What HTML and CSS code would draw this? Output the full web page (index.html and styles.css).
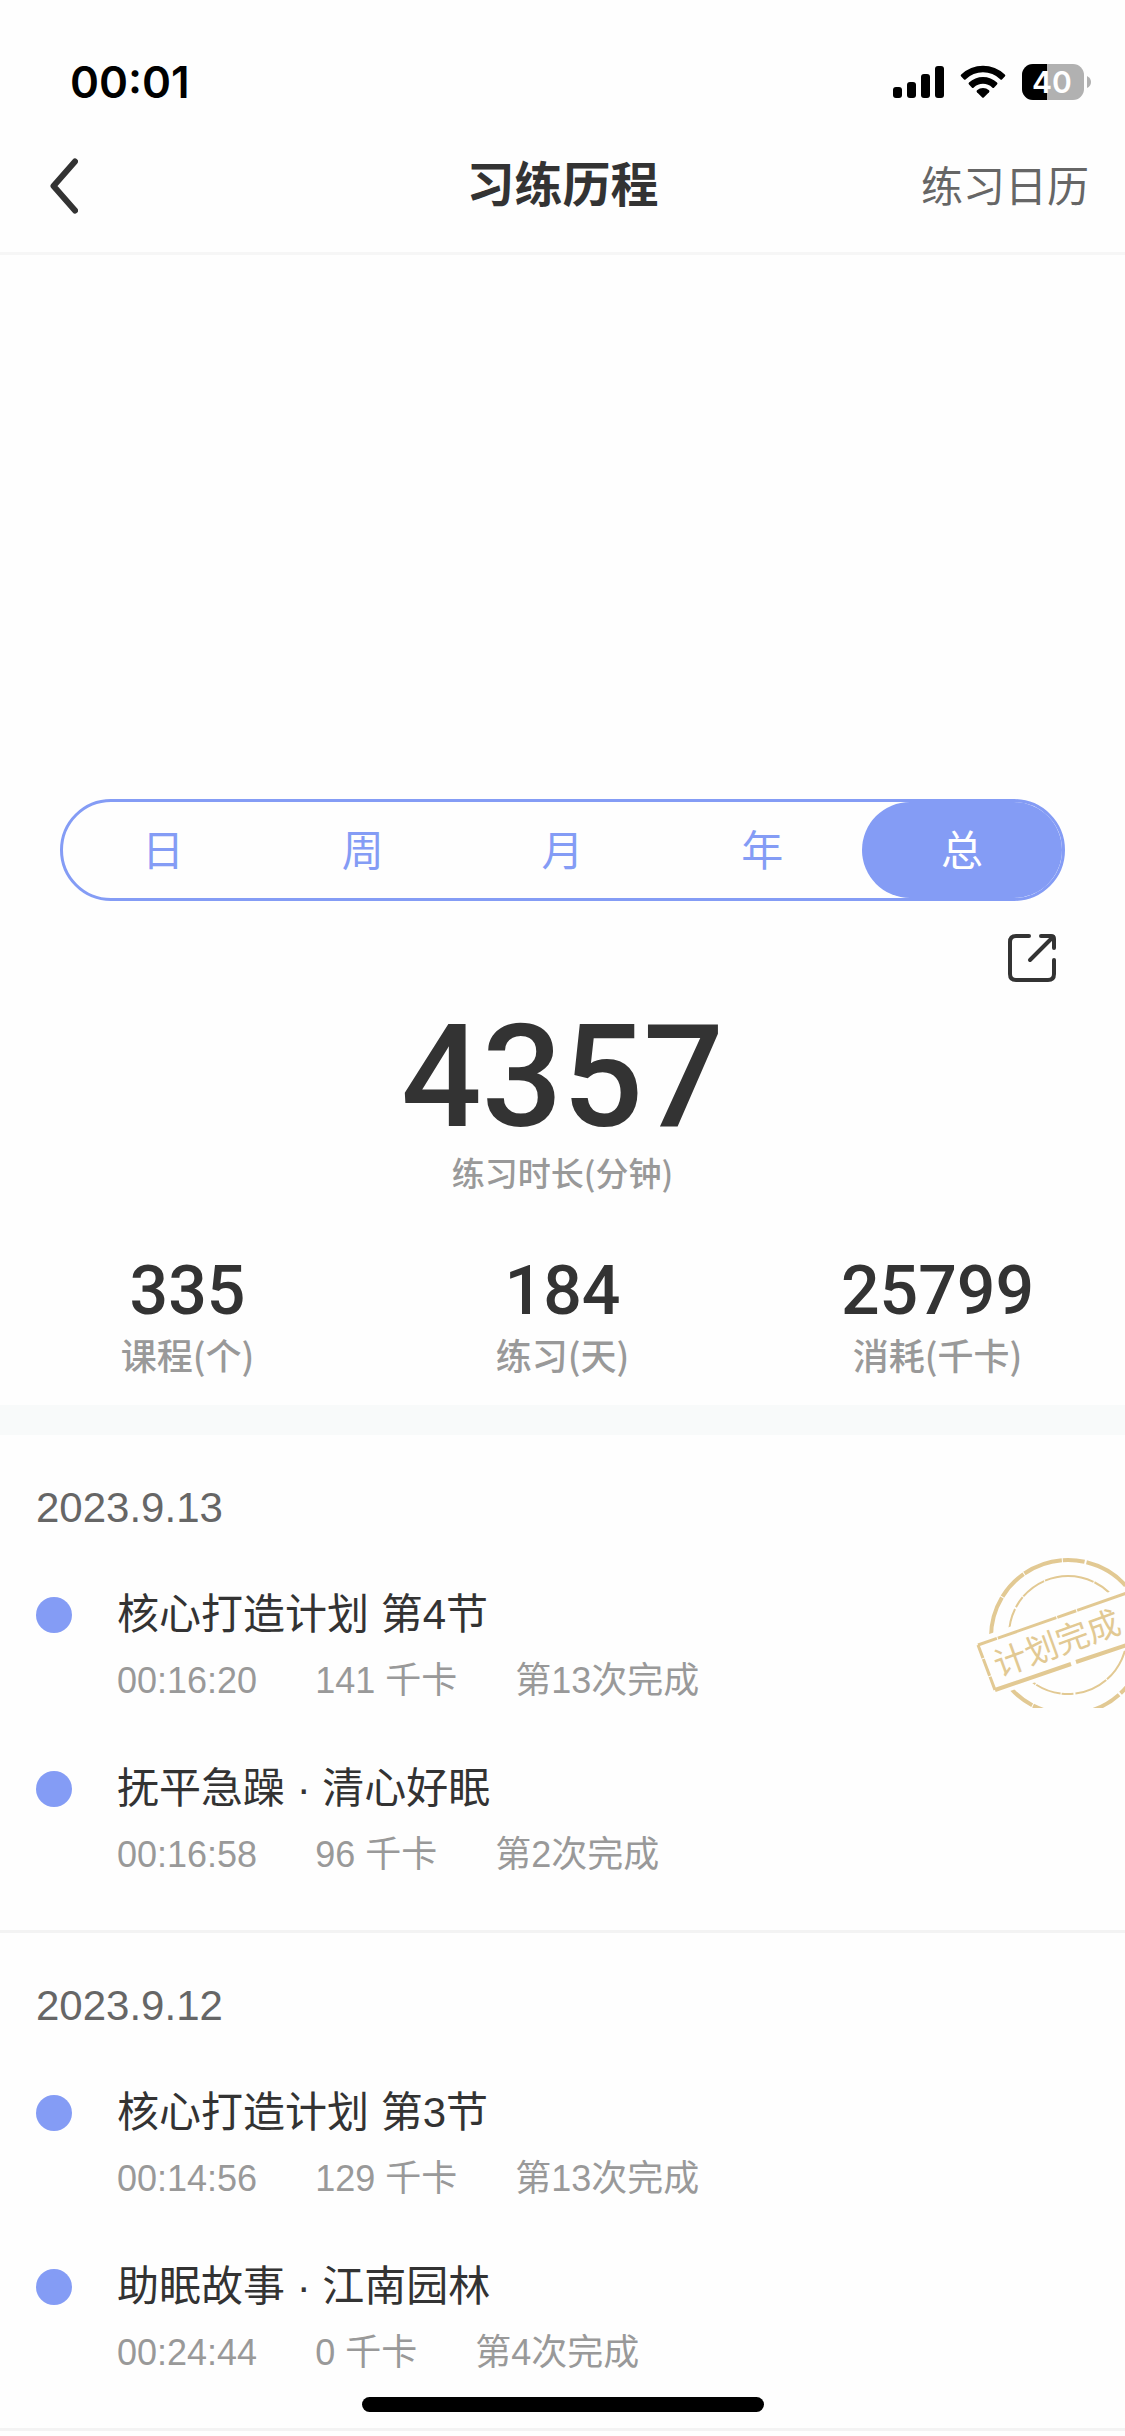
FILE: index.html
```html
<!DOCTYPE html>
<html lang="zh-CN">
  <head>
    <meta charset="utf-8" />
    <meta name="viewport" content="width=device-width, initial-scale=1" />
    <title>习练历程</title>
    <link rel="stylesheet" href="styles.css">
  </head>
  <body>
    <div class="status-bar">
      <span class="time">00:01</span>
      <div class="status-icons">
        <svg width="51" height="36" viewBox="0 0 51 36">
          <rect x="0" y="23" width="9" height="11" rx="3" />
          <rect x="14" y="18" width="9" height="16" rx="3" />
          <rect x="28" y="10" width="9" height="24" rx="3" />
          <rect x="42" y="2" width="9" height="32" rx="3" />
        </svg>
        <svg width="46" height="36" viewBox="0 0 46 36">
          <path d="M1.2 10.6a31.5 31.5 0 0 1 43.6 0q1 1 0 2l-2.6 2.6q-1 1-2 0a24.6 24.6 0 0 0-34.4 0q-1 1-2 0L1.2 12.6q-1-1 0-2z" />
          <path d="M9 18.6a20.4 20.4 0 0 1 28 0q1 1 0 2l-2.8 2.8q-1 1-2 0a13.5 13.5 0 0 0-18.4 0q-1 1-2 0L9 20.6q-1-1 0-2z" />
          <path d="M17 26.3a9.3 9.3 0 0 1 12 0q1 1 0 2L24 33.3q-1 1-2 0L17 28.3q-1-1 0-2z" />
        </svg>
        <svg width="69" height="36" viewBox="0 0 69 36">
          <clipPath id="battery">
            <rect width="62" height="36" rx="11" />
          </clipPath>
          <g clip-path="url(#battery)">
            <rect width="62" height="36" fill="#b1b1b1" />
            <rect width="25" height="36" />
          </g>
          <path d="M65 12q4 2 4 6t-4 6z" fill="#b1b1b1" />
          <text class="battery-text" x="30" y="29" text-anchor="middle">40</text>
        </svg>
      </div>
    </div>

    <header>
      <button class="back" aria-label="返回">
        <svg width="28" height="56" viewBox="0 0 28 56">
          <path d="M25 3.5L3.5 28L25 52.5" fill="none" stroke="#333" stroke-width="6" stroke-linecap="round" stroke-linejoin="round" />
        </svg>
      </button>
      <h1>习练历程</h1>
      <a class="calendar" href="#">练习日历</a>
    </header>

    <main>
      <section class="summary">
        <div class="tabs">
          <button>日</button>
          <button>周</button>
          <button>月</button>
          <button>年</button>
          <button class="active">总</button>
        </div>

        <button class="share" aria-label="分享">
          <svg width="48" height="48" viewBox="0 0 48 48" fill="none" stroke="#333" stroke-width="4" stroke-linecap="round" stroke-linejoin="round">
            <path d="M21 2H8Q2 2 2 8V40Q2 46 8 46H40Q46 46 46 40V26" />
            <path d="M33 2H43Q46 2 46 5V14" />
            <path d="M22 26L45 3" />
          </svg>
        </button>

        <div class="total">
          <p class="total-number">4357</p>
          <p class="total-label">练习时长(分钟)</p>
        </div>

        <div class="stats">
          <div>
            <p class="number">335</p>
            <p class="label">课程(个)</p>
          </div>
          <div>
            <p class="number">184</p>
            <p class="label">练习(天)</p>
          </div>
          <div>
            <p class="number">25799</p>
            <p class="label">消耗(千卡)</p>
          </div>
        </div>
      </section>

      <section class="day">
        <h2>2023.9.13</h2>
        <ul>
          <li>
            <h3>核心打造计划 第4节</h3>
            <p class="info"><span>00:16:20</span><span>141 千卡</span><span>第13次完成</span></p>
            <!-- plan finished stamp -->
            <svg class="stamp" width="150" height="153" viewBox="0 0 150 153" fill="none" stroke="#e2c993">
              <circle cx="93" cy="82" r="77" stroke-width="4" stroke-dasharray="40 1 22 2 60 1 31 1" />
              <circle cx="93" cy="80" r="59" stroke-width="2" stroke-dasharray="50 1 34 2 12 1 26 1" />
              <path d="M0 84L154 30V94L18 142Z" fill="#fefefe" stroke="none" />
              <path d="M3 90L152 38" stroke-width="3" stroke-dasharray="20 1 62 1" />
              <path d="M3 90L20 135" stroke-width="3" stroke-dasharray="14 1 18 1" />
              <path d="M20 135L96 109M101 107L152 90" stroke-width="4" />
              <text class="stamp-text" x="24" y="122" transform="rotate(-20 24 122)">计划完成</text>
            </svg>
          </li>
          <li>
            <h3>抚平急躁 · 清心好眠</h3>
            <p class="info"><span>00:16:58</span><span>96 千卡</span><span>第2次完成</span></p>
          </li>
        </ul>
      </section>

      <section class="day">
        <h2>2023.9.12</h2>
        <ul>
          <li>
            <h3>核心打造计划 第3节</h3>
            <p class="info"><span>00:14:56</span><span>129 千卡</span><span>第13次完成</span></p>
          </li>
          <li>
            <h3>助眠故事 · 江南园林</h3>
            <p class="info"><span>00:24:44</span><span>0 千卡</span><span>第4次完成</span></p>
          </li>
        </ul>
      </section>
    </main>

    <div class="home-indicator"></div>
  </body>
</html>
```
FILE: styles.css
```css
* {
  box-sizing: border-box;
  margin: 0;
  padding: 0;
}

body {
  background-color: #fefefe;
  color: #333;
  font-family: 'Liberation Sans', 'Noto Sans CJK SC', sans-serif;
  font-size: 42px;
}

button {
  background: none;
  border: 0;
  font: inherit;
  cursor: pointer;
}

svg {
  display: block;
}

/* status bar */
.status-bar {
  display: flex;
  justify-content: space-between;
  align-items: center;
  height: 118px;
  padding: 46px 34px 0 70px;
}

.time {
  font-family: Inter, sans-serif;
  font-size: 44px;
  font-weight: 600;
  color: #000;
}

.status-icons {
  display: flex;
  gap: 16px;
}

.battery-text {
  font-family: Inter, sans-serif;
  font-size: 30px;
  font-weight: 600;
  fill: #fff;
}

/* header */
header {
  display: grid;
  grid-template-columns: 1fr auto 1fr;
  align-items: center;
  height: 137px;
  padding: 2px 36px 0;
  border-bottom: 3px solid #f6f6f6;
}

.back {
  justify-self: start;
  padding-left: 14px;
}

header h1 {
  font-size: 48px;
  line-height: 60px;
  font-weight: 600;
}

.calendar {
  justify-self: end;
  padding-top: 4px;
  line-height: 60px;
  color: #666;
  text-decoration: none;
}

/* summary */
.summary {
  display: flex;
  flex-direction: column;
  padding-top: 544px;
  padding-bottom: 33px;
  border-bottom: 30px solid #f8fafa;
}

.tabs {
  display: flex;
  height: 102px;
  margin: 0 60px;
  border: 3px solid #849cf5;
  border-radius: 51px;
}

.tabs button {
  flex: 1;
  padding-bottom: 6px;
  border-radius: 48px;
  color: #849cf5;
}

.tabs .active {
  background-color: #849cf5;
  color: #fff;
}

.share {
  align-self: flex-end;
  margin: 33px 69px 42px 0;
}

.total,
.stats {
  text-align: center;
}

.total-number,
.number {
  font-family: Roboto, sans-serif;
  font-weight: 500;
}

.total-number {
  font-size: 142px;
  line-height: 108px;
}

.total-label,
.label {
  font-family: 'Noto Sans CJK SC', sans-serif;
  font-weight: 500;
  color: #999;
}

.total-label {
  margin-top: 22px;
  font-size: 33px;
  line-height: 36px;
}

.stats {
  display: grid;
  grid-template-columns: repeat(3, 1fr);
  margin-top: 75px;
}

.number {
  font-size: 68px;
  line-height: 52px;
}

.label {
  margin-top: 19px;
  font-size: 36px;
  line-height: 36px;
}

/* practice records */
.day {
  padding: 46px 0 45px 36px;
  border-bottom: 3px solid #f3f3f3;
}

.day h2 {
  margin-bottom: 50px;
  font-size: 42px;
  line-height: 54px;
  font-weight: 400;
  color: #666;
}

.day ul {
  display: flex;
  flex-direction: column;
  gap: 48px;
  list-style: none;
}

.day li {
  position: relative;
}

.day h3 {
  display: flex;
  align-items: center;
  gap: 45px;
  font-size: 42px;
  line-height: 60px;
  font-weight: 400;
}

.day h3::before {
  content: '';
  width: 36px;
  height: 36px;
  border-radius: 50%;
  background-color: #849cf5;
}

.info {
  display: flex;
  gap: 58px;
  margin-top: 6px;
  padding-left: 81px;
  font-size: 36px;
  line-height: 60px;
  color: #999;
}

.stamp {
  position: absolute;
  top: -30px;
  right: 0;
}

.stamp-text {
  font-family: 'Noto Sans CJK SC', sans-serif;
  font-size: 33px;
  font-weight: 400;
  fill: #e2c993;
  stroke: none;
}

.home-indicator {
  position: fixed;
  bottom: 24px;
  left: 50%;
  width: 402px;
  height: 15px;
  border-radius: 8px;
  background-color: #000;
  transform: translateX(-50%);
}
```
